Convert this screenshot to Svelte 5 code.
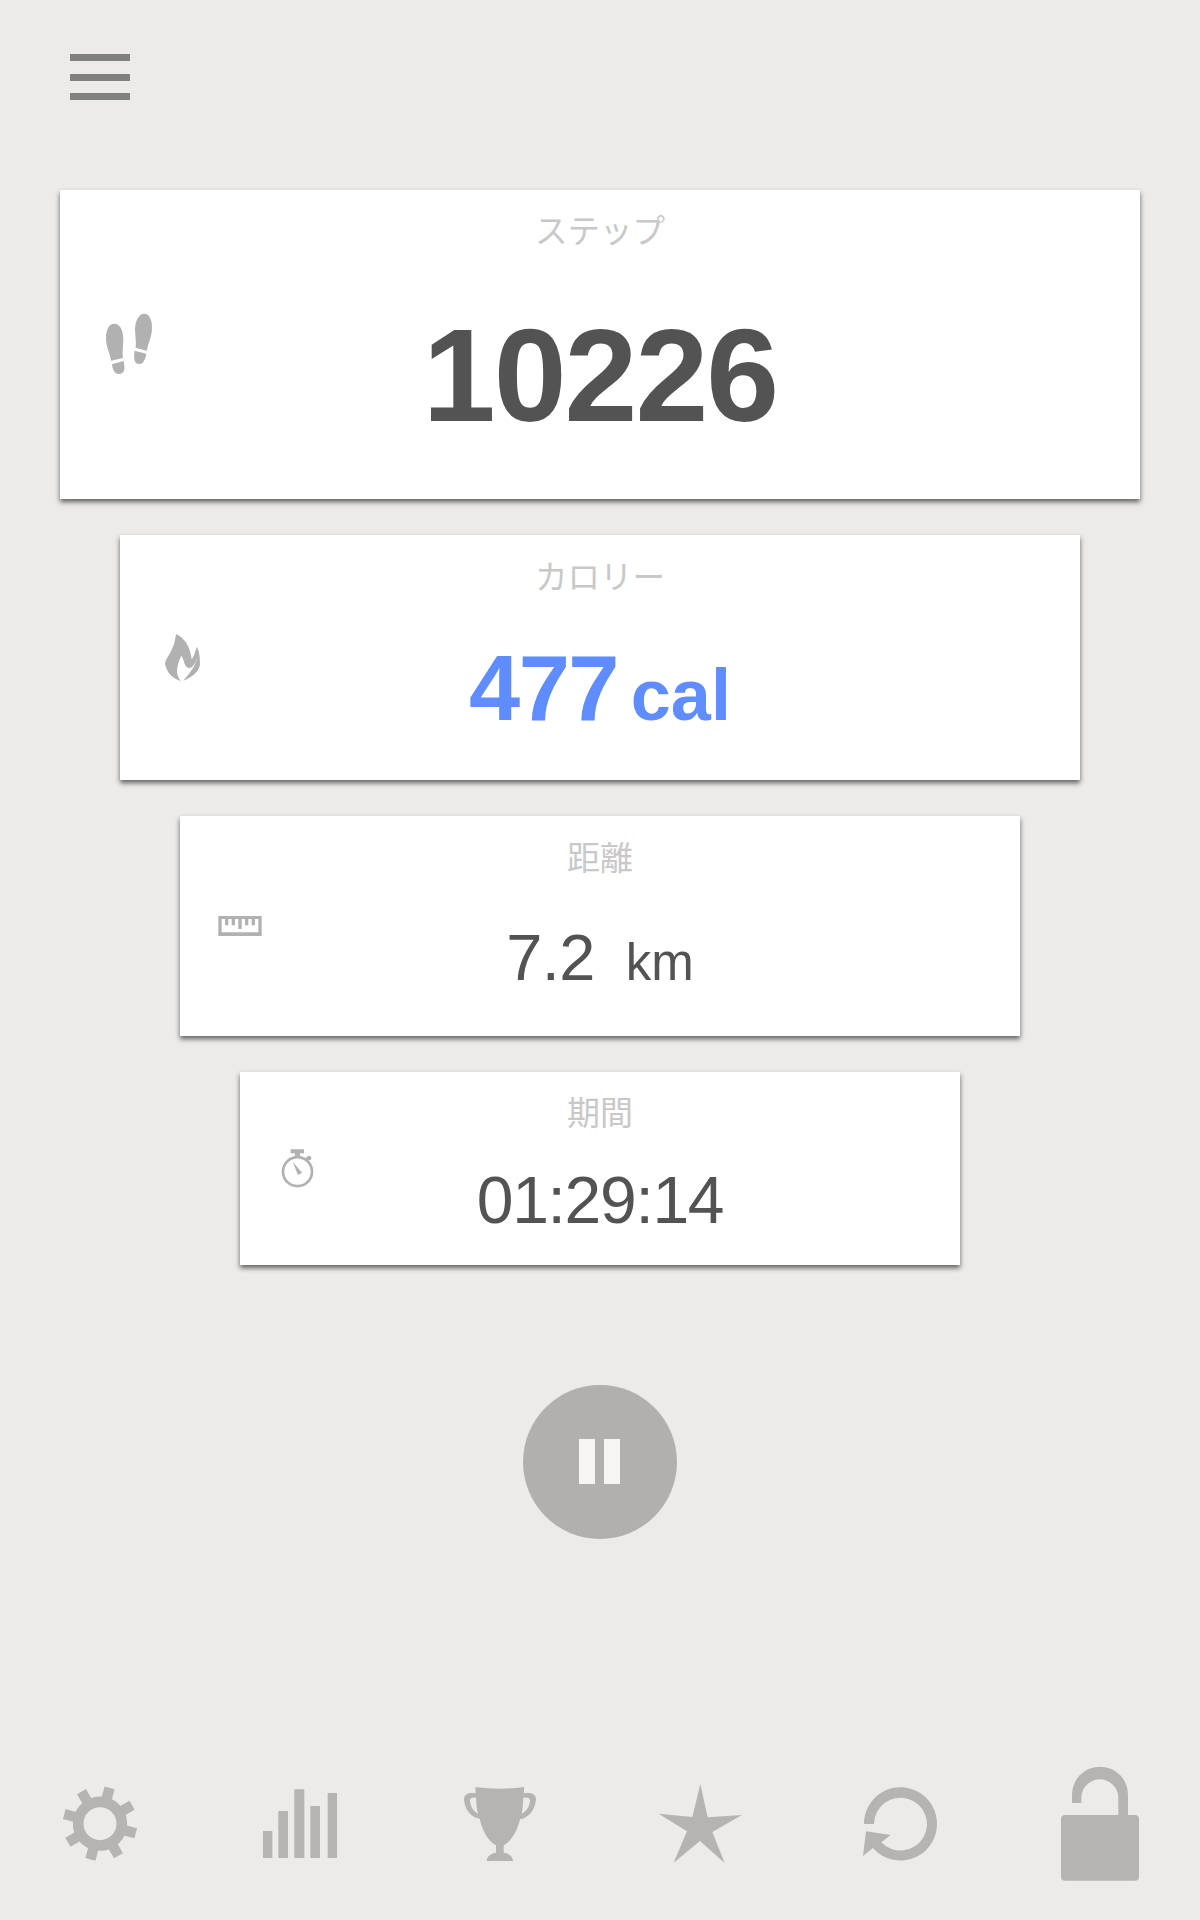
<script lang="ts">
  type Card = {
    id: "steps" | "calories" | "distance" | "duration";
    label: string;
    value: string;
    unit?: string;
  };

  const cards: Card[] = [
    { id: "steps", label: "ステップ", value: "10226" },
    { id: "calories", label: "カロリー", value: "477", unit: "cal" },
    { id: "distance", label: "距離", value: "7.2", unit: "km" },
    { id: "duration", label: "期間", value: "01:29:14" }
  ];

  const gearTeeth = [15, 60, 105, 150, 195, 240, 285, 330];
</script>

<div class="screen">
  <header class="topbar">
    <button type="button" class="menu" aria-label="メニュー">
      <span></span>
      <span></span>
      <span></span>
    </button>
  </header>

  <main class="cards">
    {#each cards as card (card.id)}
      <section class="card {card.id}">
        <h2 class="label">{card.label}</h2>
        <div class="icon">
          {#if card.id === "steps"}
            <svg width="49" height="62" viewBox="195 849 147 186">
              <path d="M223 881C207 881 198 899 198 924C198 951 209 966 213 992L249 984C246 966 250 943 250 925C249 901 240 881 223 881Z" />
              <path d="M216 1003L251 993C252 1001 254 1010 253 1018C251 1028 245 1032 237 1032C223 1032 218 1019 216 1003Z" />
              <path d="M313 851C296 851 285 874 285 900C286 920 289 937 287 953L321 962C324 937 336 922 336 893C336 868 328 851 313 851Z" />
              <path d="M284 962L319 971C316 986 311 1002 298 1002C283 1002 280 987 284 962Z" />
            </svg>
          {:else if card.id === "calories"}
            <svg width="35" height="47" viewBox="165 342 105 141">
              <path d="M198 342C225 354 242 383 245 418C253 408 256 394 260 380C267 391 270 408 270 434C266 456 244 473 220 482C238 461 255 442 262 412C255 432 248 445 235 444C222 440 224 421 214 407C205 425 201 440 201 456C202 467 206 475 212 483C189 475 170 459 165 431C169 408 191 398 198 342Z" />
            </svg>
          {:else if card.id === "distance"}
            <svg width="44" height="22" viewBox="144 345 132 66">
              <path fill-rule="evenodd" d="M145 348H275V408H145ZM155 357V397H265V357H255V376H245V357H235V376H225V357H215V387H205V357H195V376H185V357H175V376H165V357Z" />
            </svg>
          {:else}
            <svg width="33" height="39" viewBox="153 57 99 117">
              <circle cx="202.500" cy="125" r="43.500" fill="none" stroke="currentColor" stroke-width="8" />
              <path d="M182 58H222V70H210V80H195V70H182ZM188 95L216 128L204 135ZM224 87L232 80C234 75 244 78 244 84C244 89 240 91 238 90L231 96Z" />
            </svg>
          {/if}
        </div>
        <p class="value">{card.value}{#if card.unit}<span class="unit">{card.unit}</span>{/if}</p>
      </section>
    {/each}
  </main>

  <button type="button" class="pause" aria-label="一時停止">
    <span></span>
    <span></span>
  </button>

  <nav class="tools">
    <button type="button" aria-label="設定">
      <svg viewBox="0 0 360 450">
        <circle cx="180" cy="221" r="65.500" fill="none" stroke="currentColor" stroke-width="32" />
        {#each gearTeeth as angle}
          <rect x="164.500" y="110" width="31" height="38" transform="rotate({angle} 180 221)" />
        {/each}
      </svg>
    </button>
    <button type="button" aria-label="統計">
      <svg viewBox="0 0 360 450">
        <path d="M69 243H97V324H69ZM115 183H144V324H115ZM163 118H193V324H163ZM211 168H240V324H211ZM263 129H291V324H263Z" />
      </svg>
    </button>
    <button type="button" aria-label="実績">
      <svg viewBox="0 0 360 450">
        <path
          fill-rule="evenodd"
          d="M106 111Q180 121 252 111L252 130C270 126 288 131 288 147C287 176 268 203 240 208C232 243 214 274 191 286V308C207 310 218 319 219 333H140C141 319 152 310 168 308V286C145 274 127 243 119 206C92 203 73 176 72 147C72 131 90 126 107 130ZM108 143C97 142 89 144 90 154C92 171 101 184 114 192C110 177 109 160 108 143ZM250 143C249 160 248 177 245 192C259 184 268 171 270 154C271 144 262 142 250 143Z"
        />
      </svg>
    </button>
    <button type="button" aria-label="お気に入り">
      <svg viewBox="0 0 360 450">
        <path d="M181 102L203 202L306 195L217 246L254 339L180 273L101 338L141 244L56 191L157 201Z" />
      </svg>
    </button>
    <button type="button" aria-label="リセット">
      <svg viewBox="0 0 360 450">
        <path d="M72 222A109.500 110 0 1 1 99 294L69 318L78 244L152 255L124 277A79.500 79 0 1 0 102 222Z" />
      </svg>
    </button>
    <button type="button" aria-label="ロック解除">
      <svg viewBox="0 0 360 450">
        <rect x="63" y="195" width="234" height="197" rx="12" />
        <path d="M96 159V134A84 84 0 0 1 264 134V200H235V143A55.500 55 0 0 0 124 143V159Z" />
      </svg>
    </button>
  </nav>
</div>

<style>
  :global(body) {
    margin: 0;
    background: #ecebe9;
  }

  .screen {
    display: flex;
    flex-direction: column;
    align-items: center;
    box-sizing: border-box;
    width: 1200px;
    height: 1920px;
    padding-bottom: 20px;
    overflow: hidden;
    background: #ecebe9;
    font-family: "Liberation Sans", "Noto Sans CJK JP", sans-serif;
  }

  button {
    margin: 0;
    padding: 0;
    border: 0;
    background: none;
    cursor: pointer;
  }

  svg {
    display: block;
    fill: currentColor;
  }

  .topbar {
    box-sizing: border-box;
    width: 100%;
    height: 190px;
    padding: 54px 70px;
  }

  .menu {
    display: flex;
    flex-direction: column;
    justify-content: space-between;
    width: 60px;
    height: 46px;
  }

  .menu span {
    height: 7px;
    background: #80807f;
  }

  .cards {
    display: flex;
    flex-direction: column;
    align-items: center;
    gap: 36px;
  }

  .card {
    display: grid;
    grid-template-columns: 120px 1fr 120px;
    grid-template-rows: 58px 1fr;
    background: #fff;
    box-shadow: 0 3px 5px rgba(0, 0, 0, 0.6);
  }

  .label {
    grid-column: 1 / -1;
    margin: 24px 0 0;
    color: #c8c8c8;
    font-family: "Noto Sans CJK JP", sans-serif;
    font-size: 33px;
    font-weight: 400;
    line-height: 33px;
    text-align: center;
  }

  .icon {
    color: #b1b1b1;
  }

  .value {
    margin: 0;
    color: #535353;
    line-height: 1;
    text-align: center;
    white-space: nowrap;
  }

  .unit {
    letter-spacing: 0;
    line-height: 0;
  }

  .steps {
    width: 1080px;
    height: 309px;
  }

  .steps .label {
    margin-top: 22px;
    font-size: 32.5px;
  }

  .steps .icon {
    padding: 65px 0 0 45px;
  }

  .steps .value {
    padding-top: 62px;
    font-size: 131px;
    font-weight: 700;
    letter-spacing: -2px;
  }

  .calories {
    width: 960px;
    height: 245px;
  }

  .calories .label {
    margin-top: 23px;
    font-size: 32.5px;
  }

  .calories .icon {
    padding: 41px 0 0 45px;
  }

  .calories .value {
    padding-top: 49px;
    color: #5f8dff;
    font-size: 92px;
    font-weight: 700;
    letter-spacing: -1.6px;
  }

  .calories .unit {
    margin-left: 13px;
    font-size: 72px;
  }

  .distance {
    width: 840px;
    height: 220px;
  }

  .distance .icon {
    padding: 41px 0 0 38px;
  }

  .distance .value {
    padding-top: 51px;
    font-size: 65px;
    letter-spacing: -0.6px;
  }

  .distance .unit {
    margin-left: 31px;
    font-size: 51px;
  }

  .duration {
    width: 720px;
    height: 193px;
  }

  .duration .label {
    margin-top: 23px;
  }

  .duration .icon {
    padding: 19px 0 0 41px;
  }

  .duration .value {
    padding-top: 37px;
    font-size: 66px;
    letter-spacing: -1.3px;
  }

  .pause {
    display: flex;
    align-items: center;
    justify-content: center;
    gap: 9px;
    box-sizing: border-box;
    width: 154px;
    height: 154px;
    margin-top: 120px;
    padding: 0 1px 1px 0;
    border-radius: 50%;
    background: #b1b0ae;
  }

  .pause span {
    width: 16px;
    height: 45px;
    background: #f6f5f3;
  }

  .tools {
    display: grid;
    grid-template-columns: repeat(6, 1fr);
    width: 100%;
    margin-top: auto;
  }

  .tools button {
    display: flex;
    justify-content: center;
    color: #b5b4b2;
  }

  .tools svg {
    width: 120px;
    height: 150px;
  }
</style>
